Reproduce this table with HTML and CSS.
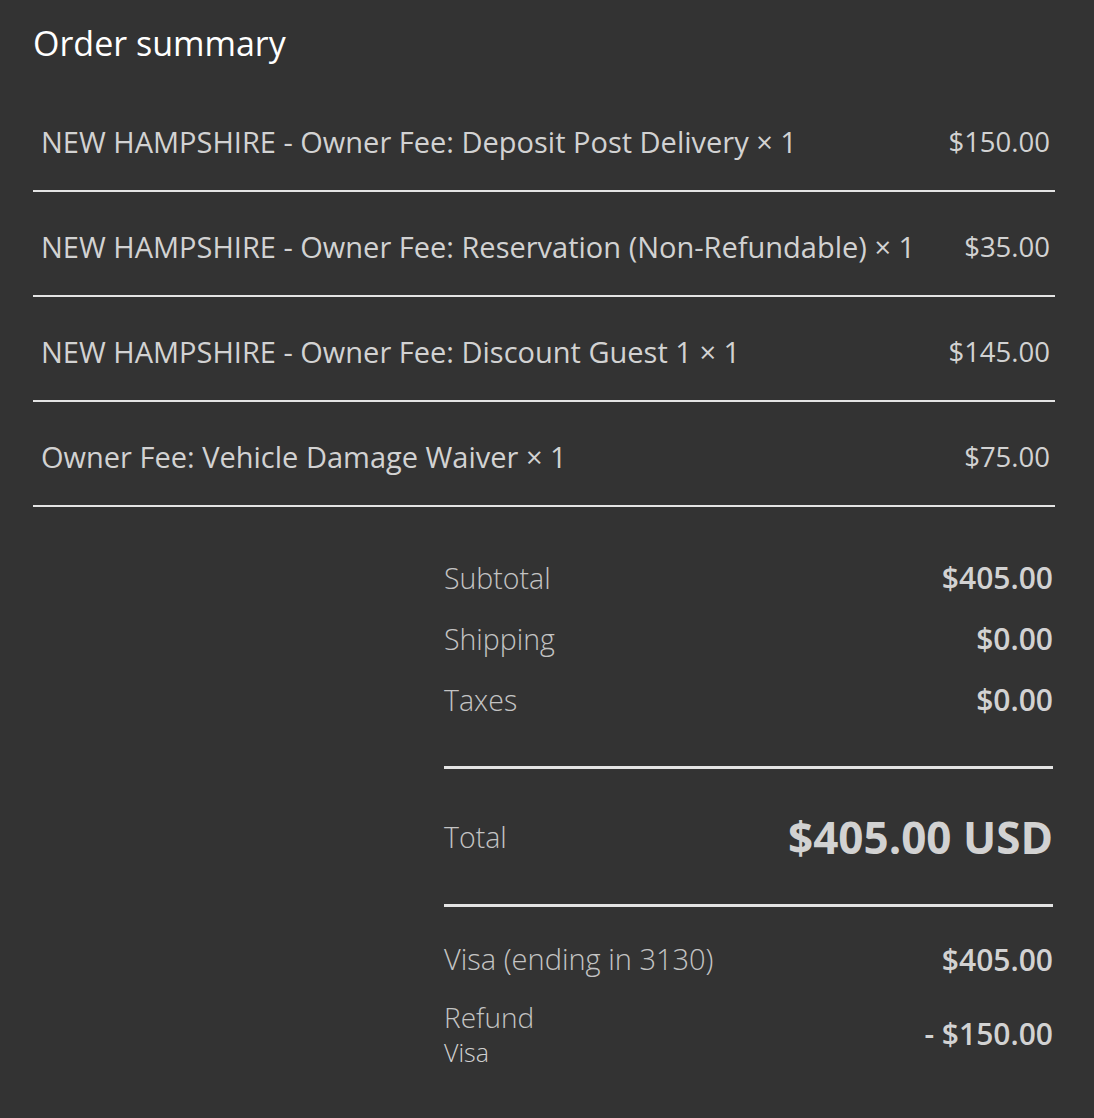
FILE: index.html
```html
<html>
  <head>
    <title>Order summary</title>
    <meta name="viewport" content="width=device-width, initial-scale=1.0" />
    <link rel="stylesheet" href="styles.css">
  </head>
  <body>
    <div class="resumen">
      <h2 class="titulo">Order summary</h2>

      <div class="lineas">
        <div class="linea">
          <span class="nombre">NEW HAMPSHIRE - Owner Fee: Deposit Post Delivery × 1</span>
          <span class="precio">$150.00</span>
        </div>
        <div class="linea">
          <span class="nombre">NEW HAMPSHIRE - Owner Fee: Reservation (Non-Refundable) × 1</span>
          <span class="precio">$35.00</span>
        </div>
        <div class="linea">
          <span class="nombre">NEW HAMPSHIRE - Owner Fee: Discount Guest 1 × 1</span>
          <span class="precio">$145.00</span>
        </div>
        <div class="linea">
          <span class="nombre">Owner Fee: Vehicle Damage Waiver × 1</span>
          <span class="precio">$75.00</span>
        </div>
      </div>

      <div class="totales">
        <div class="grupo subtotales">
          <div class="fila">
            <span class="etiqueta">Subtotal</span>
            <span class="valor">$405.00</span>
          </div>
          <div class="fila">
            <span class="etiqueta">Shipping</span>
            <span class="valor">$0.00</span>
          </div>
          <div class="fila">
            <span class="etiqueta">Taxes</span>
            <span class="valor">$0.00</span>
          </div>
        </div>

        <div class="grupo total">
          <div class="fila">
            <span class="etiqueta">Total</span>
            <span class="valor grande">$405.00 USD</span>
          </div>
        </div>

        <div class="grupo pagos">
          <div class="fila">
            <span class="etiqueta">Visa (ending in 3130)</span>
            <span class="valor">$405.00</span>
          </div>
          <div class="fila reembolso">
            <span class="etiqueta">
              Refund
              <small class="sub">Visa</small>
            </span>
            <span class="valor">- $150.00</span>
          </div>
        </div>
      </div>
    </div>
  </body>
</html>
```

FILE: styles.css
```css
body {
  margin: 0;
  background-color: #333333;
  font-family: "Open Sans", "Noto Sans", sans-serif;
}
.resumen {
  padding: 20px 39px 0 33px;
}
.titulo {
  margin: 0;
  color: #ffffff;
  font-size: 34px;
  font-weight: 400;
  line-height: 46px;
}
.lineas {
  margin-top: 21px;
}
.linea {
  display: flex;
  justify-content: space-between;
  align-items: center;
  height: 98px;
  padding: 5px 5px 0 8px;
  border-bottom: 2px solid #e4e4e4;
  color: #d2d2d2;
  font-size: 29px;
}
.precio {
  font-size: 27.5px;
}
.totales {
  margin-left: 411px;
  margin-right: 2px;
}
.grupo {
  border-bottom: 3px solid #e4e4e4;
}
.subtotales {
  padding: 40px 0 36px;
}
.subtotales .fila {
  height: 61px;
}
.fila {
  display: flex;
  justify-content: space-between;
  align-items: center;
}
.etiqueta {
  color: #c4c4c4;
  font-size: 28.5px;
  font-weight: 300;
  line-height: 38px;
}
.valor {
  color: #d2d2d2;
  font-size: 30px;
  font-weight: 600;
}
.grande {
  font-size: 44px;
  font-weight: 700;
}
.total .fila {
  height: 135px;
}
.pagos {
  border-bottom: none;
  padding-top: 23px;
}
.pagos .fila {
  min-height: 58px;
}
.pagos .etiqueta {
  font-size: 29px;
}
.reembolso {
  margin-top: 10px;
}
.reembolso .etiqueta {
  font-size: 28px;
}
.sub {
  display: block;
  color: #d0d0d0;
  font-size: 25px;
  font-weight: 300;
  line-height: 32px;
}
```
